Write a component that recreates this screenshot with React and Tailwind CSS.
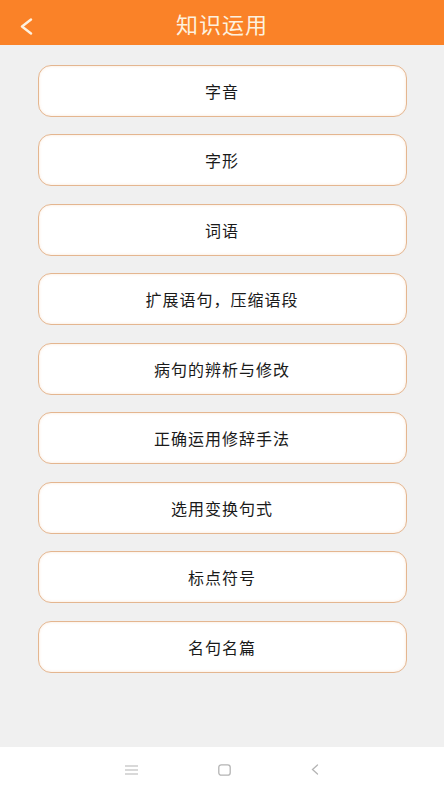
import React from "react";

const items = [
  "字音",
  "字形",
  "词语",
  "扩展语句，压缩语段",
  "病句的辨析与修改",
  "正确运用修辞手法",
  "选用变换句式",
  "标点符号",
  "名句名篇",
];

const font = {
  fontFamily: '"Noto Sans CJK SC", "Noto Sans", sans-serif',
};

export default function App() {
  return (
    <div className="w-[444px] h-[794px] flex flex-col bg-[#f0f0f0]" style={font}>
      {/* top bar */}
      <div className="h-[45px] bg-[#fa8228] flex items-center relative shrink-0">
        <svg
          className="absolute left-[19px] top-[18px]"
          width="15"
          height="17"
          viewBox="0 0 15 17"
          fill="none"
          stroke="#fdf1df"
          strokeWidth="2.4"
          strokeLinecap="round"
          strokeLinejoin="round"
        >
          <path d="M12 1.5L3 8.5l9 7" />
        </svg>
        <h1 className="w-full text-center text-[22px] text-[#fdf1df] leading-none tracking-[1px]">
          知识运用
        </h1>
      </div>

      {/* list */}
      <div className="flex-1 flex flex-col items-center gap-[17.5px] pt-[19.5px]">
        {items.map((t) => (
          <button
            key={t}
            className="w-[369px] h-[52px] shrink-0 bg-white rounded-[13px] border-[1.5px] border-[#e4b690] shadow-[inset_0_0_3px_rgba(240,180,130,0.35)] text-[16px] text-[#1a1a1a] tracking-[1px] flex items-center justify-center"
          >
            {t}
          </button>
        ))}
      </div>

      {/* system nav */}
      <div className="h-[47px] bg-white shrink-0 flex items-center justify-center gap-[80px] pb-[2px]">
        <svg width="13" height="10" viewBox="0 0 13 10" stroke="#b4b4b4" strokeWidth="1.2">
          <path d="M0 1h13M0 5h13M0 9h13" />
        </svg>
        <svg width="13" height="12" viewBox="0 0 13 12" fill="none" stroke="#b4b4b4" strokeWidth="1.3">
          <rect x="0.8" y="0.8" width="11.4" height="10.4" rx="2.5" />
        </svg>
        <svg width="8" height="11" viewBox="0 0 8 11" fill="none" stroke="#b4b4b4" strokeWidth="1.3" strokeLinecap="round">
          <path d="M6.5 1L1.5 5.5l5 4.5" />
        </svg>
      </div>
    </div>
  );
}
